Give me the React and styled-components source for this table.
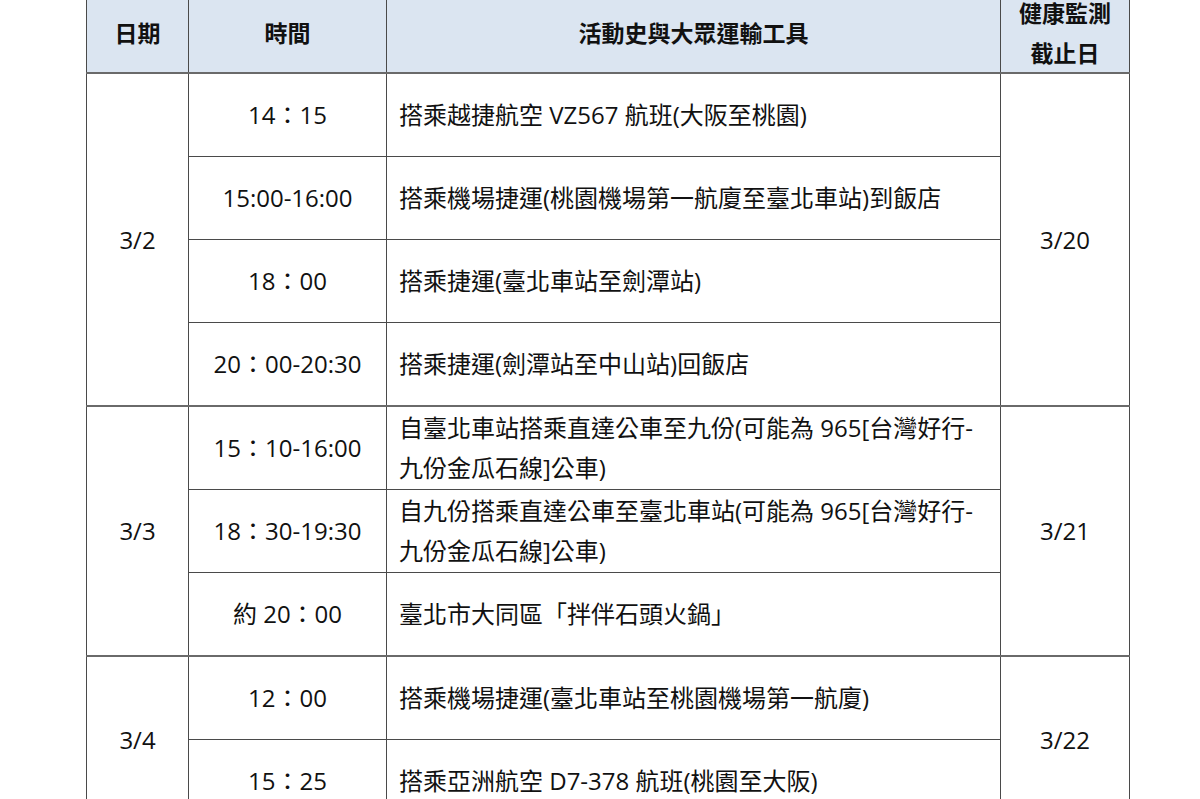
import React from 'react';
import styled, { createGlobalStyle } from 'styled-components';

const GlobalStyle = createGlobalStyle`
  html, body {
    margin: 0;
    padding: 0;
    background: #ffffff;
  }
  body {
    font-family: "Open Sans", "Noto Sans CJK TC", sans-serif;
    color: #111111;
  }
`;

const schedule = [
  {
    date: '3/2',
    until: '3/20',
    items: [
      { time: '14：15', text: '搭乘越捷航空 VZ567 航班(大阪至桃園)' },
      { time: '15:00-16:00', text: '搭乘機場捷運(桃園機場第一航廈至臺北車站)到飯店' },
      { time: '18：00', text: '搭乘捷運(臺北車站至劍潭站)' },
      { time: '20：00-20:30', text: '搭乘捷運(劍潭站至中山站)回飯店' },
    ],
  },
  {
    date: '3/3',
    until: '3/21',
    items: [
      { time: '15：10-16:00', text: '自臺北車站搭乘直達公車至九份(可能為 965[台灣好行-九份金瓜石線]公車)' },
      { time: '18：30-19:30', text: '自九份搭乘直達公車至臺北車站(可能為 965[台灣好行-九份金瓜石線]公車)' },
      { time: '約 20：00', text: '臺北市大同區「拌伴石頭火鍋」' },
    ],
  },
  {
    date: '3/4',
    until: '3/22',
    items: [
      { time: '12：00', text: '搭乘機場捷運(臺北車站至桃園機場第一航廈)' },
      { time: '15：25', text: '搭乘亞洲航空 D7-378 航班(桃園至大阪)' },
    ],
  },
];

const Page = styled.div`
  padding-left: 86px;
  margin-top: -9px;
`;

const Table = styled.table`
  border-collapse: collapse;
  table-layout: fixed;
  width: 1043px;
  font-size: 24px;
`;

const Col = styled.col`
  width: ${p => p.$w}px;
`;

const HeadCell = styled.th`
  background: #dbe5f1;
  border: 1px solid #4a4a4a;
  height: 80px;
  padding: 0 4px;
  font-size: 23px;
  font-weight: 700;
  font-family: "Noto Sans CJK TC", sans-serif;
  line-height: 40px;
  text-align: center;
  vertical-align: middle;
`;

const Cell = styled.td`
  border: 1px solid #4a4a4a;
  border-top: ${p => (p.$groupStart ? '2px solid #6a6a6a' : '1px solid #4a4a4a')};
  height: 82px;
  padding: 0 12px;
  line-height: 40px;
  text-align: ${p => (p.$left ? 'left' : 'center')};
  vertical-align: middle;
  word-break: break-all;
`;

export default function App() {
  return (
    <Page>
      <GlobalStyle />
      <Table>
        <colgroup>
          <Col $w={102} />
          <Col $w={198} />
          <Col $w={614} />
          <Col $w={129} />
        </colgroup>
        <thead>
          <tr>
            <HeadCell>日期</HeadCell>
            <HeadCell>時間</HeadCell>
            <HeadCell>活動史與大眾運輸工具</HeadCell>
            <HeadCell>健康監測<br />截止日</HeadCell>
          </tr>
        </thead>
        <tbody>
          {schedule.map(group =>
            group.items.map((item, i) => (
              <tr key={group.date + i}>
                {i === 0 && (
                  <Cell rowSpan={group.items.length} $groupStart>
                    {group.date}
                  </Cell>
                )}
                <Cell $groupStart={i === 0}>{item.time}</Cell>
                <Cell $groupStart={i === 0} $left>{item.text}</Cell>
                {i === 0 && (
                  <Cell rowSpan={group.items.length} $groupStart>
                    {group.until}
                  </Cell>
                )}
              </tr>
            ))
          )}
        </tbody>
      </Table>
    </Page>
  );
}
